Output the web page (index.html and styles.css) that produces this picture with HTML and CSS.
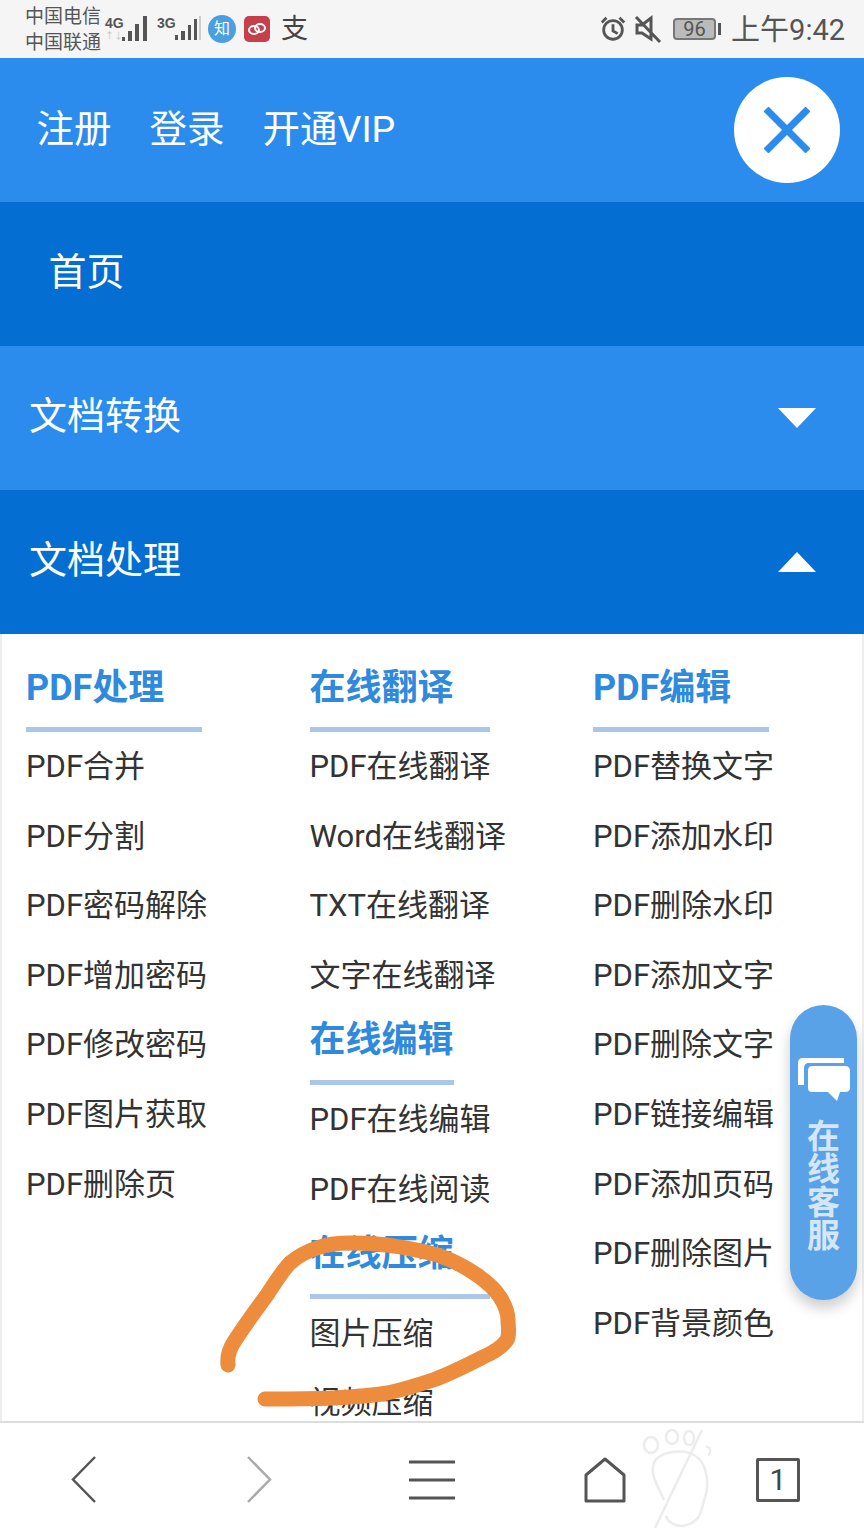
FILE: index.html
```html
<!DOCTYPE html>
<html lang="zh-CN">
<head>
  <meta charset="UTF-8" />
  <meta name="viewport" content="width=device-width, initial-scale=1.0" />
  <title>文档处理</title>
  <link rel="stylesheet" href="styles.css">
</head>
<body>
  <div class="phone">
    <div class="statusbar">
      <div class="carriers"><span>中国电信</span><span>中国联通</span></div>
      <div class="signal">
        <div class="sig-text"><b>4G</b><small>↑↓</small></div>
        <svg width="27" height="28" viewBox="0 0 27 28"><path d="M0 22h3v4H0zM6 16h4v10H6zM13 9h4v17h-4zM21 1h4v25h-4z" fill="#555"/></svg>
      </div>
      <div class="signal sig2">
        <div class="sig-text"><b>3G</b></div>
        <svg width="28" height="28" viewBox="0 0 28 28"><path d="M1 20h3v5H1zM7 16h4v9H7zM14 10h3v15h-3zM20 4h3v21h-3z" fill="#555"/><path d="M25 1h2v24h-2z" fill="#ccc"/></svg>
      </div>
      <div class="app-zhi">知</div>
      <div class="app-weibo">
        <svg width="20" height="14" viewBox="0 0 20 14"><ellipse cx="7" cy="8" rx="5" ry="4" fill="none" stroke="#fff" stroke-width="2"/><ellipse cx="13" cy="6" rx="5" ry="4" fill="none" stroke="#fff" stroke-width="2"/></svg>
      </div>
      <div class="app-zfb">支</div>
      <div class="status-right">
        <svg width="28" height="30" viewBox="0 0 30 30" fill="none" stroke="#555" stroke-width="3"><circle cx="15" cy="16" r="10"/><path d="M15 10v7l5 3M3 8l5-5M27 8l-5-5"/></svg>
        <svg class="mute" width="28" height="30" viewBox="0 0 28 30" fill="none" stroke="#555" stroke-width="3"><path d="M3 11h5l9-7v21l-9-6H3zM2 3l24 25"/></svg>
        <div class="battery"><span>96</span></div>
        <div class="battery-tip"></div>
        <div class="clock">上午9:42</div>
      </div>
    </div>

    <header class="topbar">
      <a>注册</a>
      <a>登录</a>
      <a>开通VIP</a>
      <div class="close">
        <svg width="46" height="46" viewBox="0 0 46 46"><path d="M2 2l42 42M44 2L2 44" stroke="#2b8cee" stroke-width="7"/></svg>
      </div>
    </header>

    <div class="menu-row dark home">首页</div>
    <div class="menu-row">文档转换<i class="arrow down"></i></div>
    <div class="menu-row dark">文档处理<i class="arrow up"></i></div>

    <div class="panel">
      <div class="col">
        <h3>PDF处理</h3>
        <a>PDF合并</a>
        <a>PDF分割</a>
        <a>PDF密码解除</a>
        <a>PDF增加密码</a>
        <a>PDF修改密码</a>
        <a>PDF图片获取</a>
        <a>PDF删除页</a>
      </div>
      <div class="col">
        <h3 class="wide">在线翻译</h3>
        <a>PDF在线翻译</a>
        <a>Word在线翻译</a>
        <a>TXT在线翻译</a>
        <a>文字在线翻译</a>
        <h3 class="sub">在线编辑</h3>
        <a>PDF在线编辑</a>
        <a>PDF在线阅读</a>
        <h3 class="sub wide compress">在线压缩</h3>
        <a>图片压缩</a>
        <a>视频压缩</a>
      </div>
      <div class="col">
        <h3>PDF编辑</h3>
        <a>PDF替换文字</a>
        <a>PDF添加水印</a>
        <a>PDF删除水印</a>
        <a>PDF添加文字</a>
        <a>PDF删除文字</a>
        <a>PDF链接编辑</a>
        <a>PDF添加页码</a>
        <a>PDF删除图片</a>
        <a>PDF背景颜色</a>
      </div>

      <svg class="scribble" width="300" height="180" viewBox="0 0 300 180">
        <path d="M8 135C7 126 10 118 14 112C24 96 36 80 47 65C55 53 62 41 70 33C78 26 88 21 97 18C108 14 120 13 130 13C147 13 164 14 180 17C196 20 210 22 223 27C236 32 247 38 257 45C267 52 275 59 280 67C285 75 288 82 288 90C288 97 290 104 287 110C282 117 272 123 263 127C247 135 230 144 213 150C198 155 182 160 167 163C150 166 132 167 113 168C90 169 68 169 45 169" fill="none" stroke="#ee8c3e" stroke-width="15" stroke-linecap="round" stroke-linejoin="round"/>
      </svg>
    </div>

    <div class="service">
      <svg width="54" height="46" viewBox="0 0 54 46"><path d="M1 28V6q0-5 5-5h41v5H12q-5 0-5 5v17z" fill="#fff"/><path d="M15 9h33q5 0 5 5v17q0 4-5 4H43l-3 9-9-9H15q-4 0-4-4V14q0-5 4-5z" fill="#fff"/></svg>
      <span>在线客服</span>
    </div>

    <nav class="bottombar">
      <svg class="nav-back" width="26" height="47" viewBox="0 0 26 47" fill="none" stroke="#555" stroke-width="2.5"><path d="M24 1L2 23.5 24 46"/></svg>
      <svg class="nav-forward" width="26" height="47" viewBox="0 0 26 47" fill="none" stroke="#aaa" stroke-width="2.5"><path d="M2 1l22 22.5L2 46"/></svg>
      <svg class="nav-menu" width="46" height="40" viewBox="0 0 46 40" fill="none" stroke="#555" stroke-width="3"><path d="M0 2h46M0 20h46M0 38h46"/></svg>
      <svg class="nav-home" width="42" height="46" viewBox="0 0 42 46" fill="none" stroke="#555" stroke-width="3" stroke-linejoin="round"><path d="M21 2L40 18V44H2V18z"/></svg>
      <div class="tabs">1</div>
      <svg class="footprint" width="76" height="102" viewBox="0 0 76 102" fill="none" stroke="#ececec" stroke-width="2.5">
        <ellipse cx="9" cy="17" rx="7" ry="8"/><ellipse cx="30" cy="9" rx="6" ry="7"/><ellipse cx="47" cy="10" rx="5" ry="7"/>
        <path d="M64 19a3 4 0 0 1 2 8M22 72C14 55 8 45 12 35C16 24 40 20 52 27C66 35 68 58 62 72C60 82 58 96 40 98C32 98 26 94 24 88M60 2L13 100"/>
      </svg>
    </nav>
  </div>
</body>
</html>
```
FILE: styles.css
```css
* {
  box-sizing: border-box;
}
body {
  margin: 0;
  font-family: Roboto, "Noto Sans CJK SC", sans-serif;
  background: #fff;
}
.phone {
  position: relative;
  width: 864px;
  height: 1536px;
  overflow: hidden;
  display: flex;
  flex-direction: column;
}
.statusbar {
  height: 58px;
  flex: none;
  background: #f5f5f5;
  display: flex;
  align-items: center;
  padding: 0 19px 0 25px;
  color: #555;
}
.carriers {
  display: flex;
  flex-direction: column;
  margin-top: 2px;
  font-size: 19px;
  line-height: 26px;
  width: 78px;
}
.signal {
  display: flex;
  align-items: center;
  margin-left: 2px;
}
.sig-text {
  display: flex;
  flex-direction: column;
  align-self: flex-start;
  width: 17px;
}
.sig-text b {
  font: bold 14px/16px "Liberation Sans Narrow", "Liberation Sans", sans-serif;
}
.sig-text small {
  font-size: 9px;
  line-height: 10px;
  color: #c4c4c4;
}
.sig2 {
  margin-left: 8px;
}
.app-zhi {
  width: 28px;
  height: 28px;
  margin-left: 6px;
  border-radius: 50%;
  background: #4a9fe0;
  color: #fff;
  font-size: 16px;
  line-height: 28px;
  text-align: center;
}
.app-weibo {
  width: 26px;
  height: 26px;
  margin-left: 8px;
  border-radius: 5px;
  background: #c5404a;
  display: flex;
  align-items: center;
  justify-content: center;
}
.app-zfb {
  margin-left: 11px;
  margin-top: 1px;
  font-size: 27px;
  line-height: 1;
  color: #444;
}
.status-right {
  margin-left: auto;
  display: flex;
  align-items: center;
}
.mute {
  margin-left: 7px;
}
.battery {
  width: 43px;
  height: 22px;
  margin-left: 11px;
  border: 2px solid #777;
  border-radius: 4px;
  background: #bbb;
  font-size: 20px;
  line-height: 18px;
  text-align: center;
}
.battery-tip {
  width: 3px;
  height: 12px;
  margin-left: 2px;
  background: #555;
}
.clock {
  margin-left: 10px;
  margin-bottom: 4px;
  font-size: 29px;
  color: #555;
}
.topbar {
  height: 144px;
  flex: none;
  background: #2b8cee;
  display: flex;
  align-items: center;
  padding: 0 24px 0 36.5px;
  gap: 38px;
  color: #fff;
  font-size: 37.5px;
}
.topbar a {
  margin-bottom: 10px;
}
.close {
  width: 106px;
  height: 106px;
  margin-left: auto;
  border-radius: 50%;
  background: #fff;
  display: flex;
  align-items: center;
  justify-content: center;
}
.menu-row {
  height: 144px;
  flex: none;
  background: #2b8cee;
  color: #fff;
  font-size: 38px;
  padding: 0 48px 12px 29px;
  display: flex;
  align-items: center;
  justify-content: space-between;
}
.menu-row.dark {
  background: #056ed2;
}
.menu-row.home {
  padding-left: 48.5px;
}
.arrow {
  width: 0;
  height: 0;
  margin-top: 12px;
  border-left: 19px solid transparent;
  border-right: 19px solid transparent;
}
.arrow.down {
  border-top: 20px solid #fff;
}
.arrow.up {
  border-bottom: 20px solid #fff;
}
.panel {
  position: relative;
  flex: 1;
  display: flex;
  overflow: hidden;
  border-left: 2px solid #eee;
  border-right: 2px solid #eee;
}
.col {
  width: 283.5px;
  flex: none;
  padding-top: 27px;
  padding-left: 24px;
}
.col h3 {
  width: 176px;
  height: 71px;
  margin: 0;
  border-bottom: 5px solid #aac6e8;
  color: #2f8ade;
  font-size: 36px;
  line-height: 54px;
  font-weight: 700;
}
.col h3.wide {
  width: 180px;
}
.col h3.sub {
  width: 144px;
  height: 74.6px;
  padding-top: 3px;
}
.col h3.sub.wide {
  width: 180px;
}
.col h3.compress {
  padding-top: 3px;
}
.col a {
  display: block;
  height: 69.6px;
  font-size: 31px;
  line-height: 70px;
  color: #333;
  white-space: nowrap;
}
.scribble {
  position: absolute;
  left: 218px;
  top: 596px;
}
.service {
  position: absolute;
  left: 790px;
  top: 1005px;
  width: 67px;
  height: 295px;
  border-radius: 34px;
  background: #5aa2e8;
  box-shadow: 0 8px 14px rgba(0, 0, 0, 0.2);
  display: flex;
  flex-direction: column;
  align-items: center;
  padding-top: 52px;
  color: #d5e6f8;
}
.service span {
  width: 34px;
  margin-top: 17px;
  font-size: 33px;
  line-height: 33px;
  font-weight: 700;
  text-align: center;
}
.bottombar {
  position: relative;
  height: 115px;
  flex: none;
  background: #fff;
  border-top: 2px solid #ddd;
  display: flex;
  align-items: center;
  padding-left: 71px;
}
.nav-forward {
  margin-left: 149px;
}
.nav-menu {
  margin-left: 137px;
}
.nav-home {
  margin-left: 129px;
}
.tabs {
  width: 44px;
  height: 44px;
  margin-left: 130px;
  border: 3px solid #555;
  border-radius: 2px;
  color: #444;
  font-size: 30px;
  line-height: 38px;
  text-align: center;
}
.footprint {
  position: absolute;
  left: 642px;
  top: 5px;
}
```
